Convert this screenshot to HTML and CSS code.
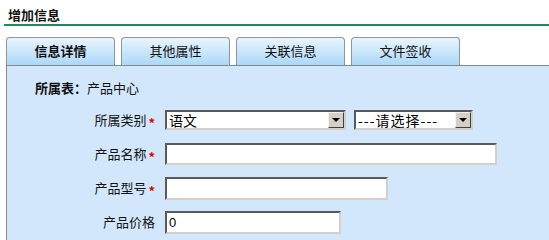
FILE: index.html
```html
<!doctype html>
<html lang="zh-CN">
  <head>
    <meta charset="UTF-8" />
    <title>增加信息</title>
    <link rel="stylesheet" href="styles.css">
  </head>
  <body>
    <div class="page-title">增加信息</div>

    <div class="tabs">
      <div class="tab active">信息详情</div>
      <div class="tab">其他属性</div>
      <div class="tab">关联信息</div>
      <div class="tab">文件签收</div>
    </div>

    <div class="panel">
      <div class="info-line"><strong>所属表：</strong>产品中心</div>

      <div class="form-grid">
        <label class="form-label">所属类别<span class="req">*</span></label>
        <div class="form-field">
          <span class="select select-lg">
            <select>
              <option>语文</option>
            </select>
            <span class="select-btn"></span>
          </span>
          <span class="select select-sm">
            <select>
              <option>---请选择---</option>
            </select>
            <span class="select-btn"></span>
          </span>
        </div>

        <label class="form-label">产品名称<span class="req">*</span></label>
        <div class="form-field">
          <input type="text" class="input input-lg" />
        </div>

        <label class="form-label">产品型号<span class="req">*</span></label>
        <div class="form-field">
          <input type="text" class="input input-md" />
        </div>

        <label class="form-label">产品价格</label>
        <div class="form-field">
          <input type="text" class="input input-sm" value="0" />
        </div>
      </div>
    </div>
  </body>
</html>
```

FILE: styles.css
```css
* {
  margin: 0;
  padding: 0;
  box-sizing: border-box;
}

body {
  font-family: "Noto Sans CJK SC", "DejaVu Sans", sans-serif;
  font-size: 13px;
  color: #111;
  background: white;
  height: 240px;
  overflow: hidden;
}

.page-title {
  margin-left: 4px;
  padding: 7px 0 1px 4px;
  line-height: 16px;
  font-weight: bold;
  border-bottom: 2px solid #1f8a5a;
}

.tabs {
  display: flex;
  gap: 6px;
  margin-top: 11px;
  padding-left: 6px;
}

.tab {
  width: 109px;
  height: 28px;
  line-height: 26px;
  text-align: center;
  border: 1px solid #8c969e;
  border-bottom: none;
  border-radius: 4px 4px 0 0;
  background: linear-gradient(to bottom, #eaf5fd 0%, #cde8fb 45%, #acd8f7 100%);
}

.tab.active {
  font-weight: bold;
}

.panel {
  margin-left: 6px;
  height: 175px;
  padding: 14px 0 0 0;
  background: #d2e7fb;
  border-top: 1px solid #848a90;
  border-left: 1px solid #848a90;
}

.info-line {
  padding-left: 28px;
  line-height: 16px;
}

.info-line strong {
  font-weight: bold;
}

.form-grid {
  display: grid;
  grid-template-columns: 148px 1fr;
  column-gap: 10px;
  row-gap: 12px;
  margin-top: 13px;
  align-items: center;
}

.form-label {
  height: 22px;
  text-align: right;
  line-height: 22px;
}

.req {
  color: #e00000;
  font-size: 13px;
  font-weight: bold;
  line-height: 10px;
  margin-left: 2px;
  vertical-align: -3px;
}

.form-field {
  display: flex;
  align-items: center;
  gap: 8px;
  height: 22px;
}

.input,
.select {
  border-style: solid;
  border-width: 2px;
  border-color: #5a5a5a #d4d0c8 #d4d0c8 #5a5a5a;
  background: white;
}

.input {
  height: 22px;
  padding: 0 2px;
  font-family: "Liberation Sans", "Noto Sans CJK SC", sans-serif;
  font-size: 13px;
  color: #000;
  outline: none;
}

.input-lg {
  width: 332px;
}

.input-md {
  width: 223px;
  height: 23px;
}

.input-sm {
  width: 176px;
  height: 23px;
}

.select {
  display: inline-flex;
  align-items: stretch;
  height: 20px;
}

.select-lg {
  width: 181px;
}

.select-sm {
  width: 119px;
}

.select select {
  flex: 1;
  min-width: 0;
  border: none;
  outline: none;
  appearance: none;
  background: white;
  padding: 0 2px;
  font-family: "Noto Sans CJK SC", sans-serif;
  font-size: 14px;
  line-height: 16px;
  color: #000;
}

.select-sm select {
  letter-spacing: 1px;
}

.select-btn {
  width: 16px;
  background: #d4d0c8;
  border-style: solid;
  border-width: 1px;
  border-color: #f4f2ee #404040 #404040 #f4f2ee;
  display: flex;
  align-items: center;
  justify-content: center;
}

.select-btn::after {
  content: "";
  border-left: 4px solid transparent;
  border-right: 4px solid transparent;
  border-top: 4px solid #000;
}
```
